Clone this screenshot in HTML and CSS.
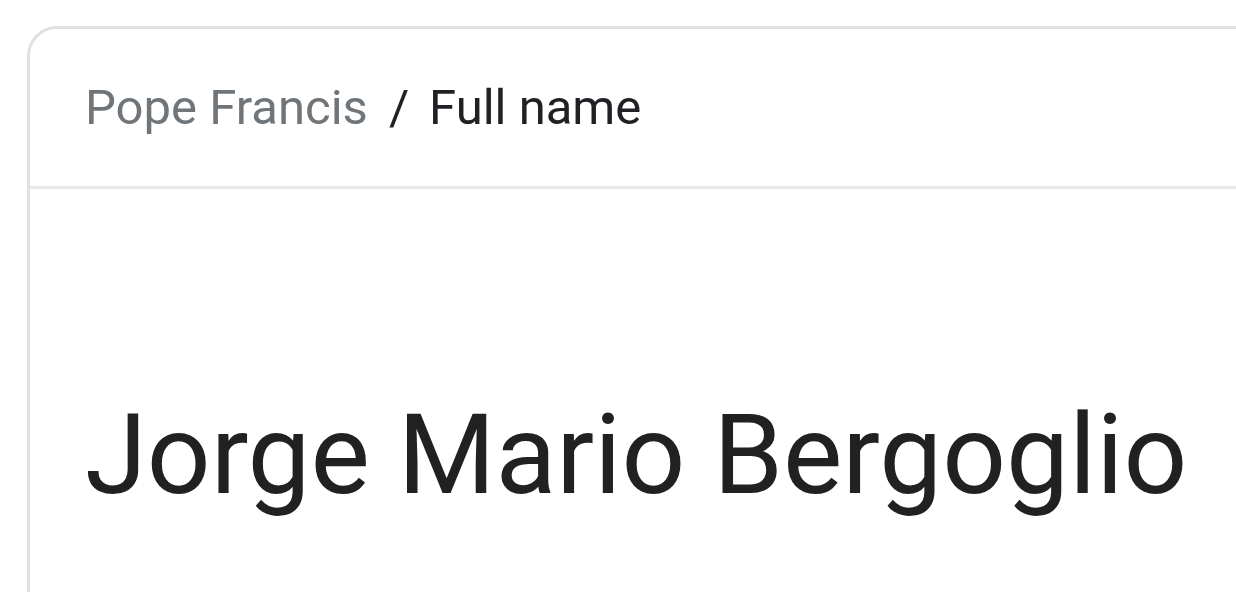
FILE: index.html
```html
<!DOCTYPE html>
<html lang="en">
<head>
<meta charset="utf-8">
<title>Full name</title>
<link rel="stylesheet" href="styles.css">
</head>
<body>
  <div class="card">
    <div class="card-header">
      <nav class="breadcrumb">
        <span class="crumb-parent">Pope Francis</span>
        <span class="crumb-sep">/</span>
        <span class="crumb-current">Full name</span>
      </nav>
    </div>
    <div class="card-body">
      <div class="answer">Jorge Mario Bergoglio</div>
    </div>
  </div>
</body>
</html>
```

FILE: styles.css
```css
html, body {
  margin: 0;
  padding: 0;
  background: #ffffff;
  overflow: hidden;
}

body {
  font-family: Roboto, "Liberation Sans", Arial, sans-serif;
  color: #202124;
}

.card {
  margin: 26px 0 0 27px;
  width: 1300px;
  height: 700px;
  border: 3px solid #dfe1e5;
  border-radius: 30px 0 0 0;
  box-sizing: border-box;
}

.card-header {
  height: 160px;
  display: flex;
  align-items: center;
  padding-left: 55px;
  border-bottom: 3px solid #e8e8e8;
  box-sizing: border-box;
}

.breadcrumb {
  display: flex;
  align-items: baseline;
  font-size: 49px;
}

.crumb-parent {
  color: #70757a;
}

.crumb-sep {
  color: #202124;
  margin: 0 20px 0 21px;
}

.crumb-current {
  color: #202124;
}

.card-body {
  padding: 200px 0 0 55px;
}

.answer {
  font-size: 112px;
  color: #212121;
  white-space: nowrap;
}
```
